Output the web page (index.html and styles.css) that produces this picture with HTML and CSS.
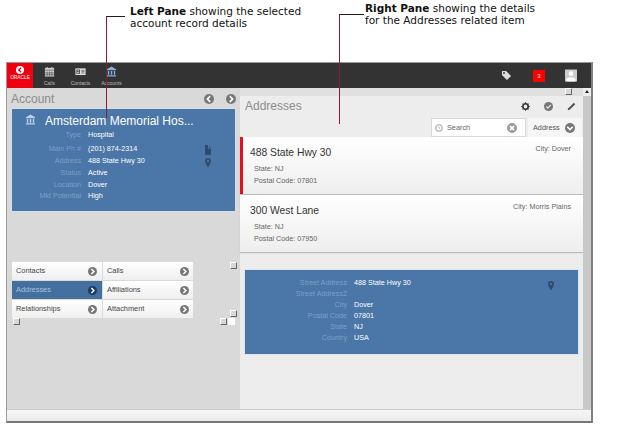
FILE: index.html
```html
<!DOCTYPE html>
<html lang="en">
<head>
<meta charset="utf-8">
<title>Accounts panes</title>
<link rel="stylesheet" href="styles.css">
</head>
<body>
<div class="page">
  <div class="notes">
    <p class="note note-left"><b>Left Pane</b> showing the selected<br>account record details</p>
    <p class="note note-right"><b>Right Pane</b> showing the details<br>for the Addresses related item</p>
  </div>
  <i class="leader leader-left"></i>
  <i class="leader leader-right"></i>

  <div class="window">
    <header class="topbar">
      <div class="logo">
        <svg class="logo-back" viewBox="0 0 8 8"><circle cx="4" cy="4" r="4" fill="#fff"/><path d="M5 1.800 2.800 4 5 6.200" fill="none" stroke="#e8000d" stroke-width="1.400"/></svg>
        <span>ORACLE</span>
      </div>
      <nav class="tabs">
        <div class="tab">
          <svg viewBox="0 0 12 12"><path d="M1 2h10v9.500H1z" fill="#ccc"/><path d="M1 4.500h10M3.500 6v5M6 6v5M8.500 6v5M1 7.500h10M1 9.500h10" stroke="#444" stroke-width=".6"/><path d="M3.500 1v2M8.500 1v2" stroke="#ccc" stroke-width="1"/></svg>
          <span>Calls</span>
        </div>
        <div class="tab">
          <svg viewBox="0 0 14 12"><rect x=".5" y="2" width="13" height="8.500" fill="#ddd"/><rect x="1.800" y="3.500" width="4.500" height="5.500" fill="#444"/><circle cx="4" cy="5" r="1" fill="#ddd"/><path d="M2.600 8.200c0-2 2.800-2 2.800 0z" fill="#ddd"/><path d="M8 4.500h4M8 6.200h4M8 8h4" stroke="#444" stroke-width=".8"/></svg>
          <span>Contacts</span>
        </div>
        <div class="tab">
          <svg viewBox="0 0 12 12"><path d="M6 .5 11 3.500V4.500H1V3.500z" fill="#7fb0de"/><path d="M2 5.500h1.500v4H2zM5.200 5.500h1.600v4H5.200zM8.500 5.500H10v4H8.500zM1 10h10v1.500H1z" fill="#7fb0de"/></svg>
          <span>Accounts</span>
        </div>
      </nav>
      <div class="top-actions">
        <svg class="tag" viewBox="0 0 12 12"><path d="M1 1h4.500L11 6.500 6.500 11 1 5.500z" fill="#ddd"/><circle cx="3.300" cy="3.300" r="1" fill="#333"/></svg>
        <span class="badge">3</span>
        <svg class="avatar" viewBox="0 0 13 13"><rect width="13" height="13" fill="#ccc"/><circle cx="6.500" cy="4.500" r="2.500" fill="#fff"/><path d="M1.500 11.500c0-4 10-4 10 0v1.500h-10z" fill="#fff"/></svg>
      </div>
    </header>

    <div class="main">
      <section class="left">
        <div class="left-head">
          <h2>Account</h2>
          <div class="pager">
            <span class="round"><svg viewBox="0 0 8 8"><path d="M5 1.700 2.700 4 5 6.300" /></svg></span>
            <span class="round"><svg viewBox="0 0 8 8"><path d="M3 1.700 5.300 4 3 6.300" /></svg></span>
          </div>
        </div>
        <div class="account-card">
          <div class="account-title">
            <svg viewBox="0 0 12 12"><path d="M6 .5 11 3.500V4.500H1V3.500z" fill="#bcd3ea"/><path d="M2 5.500h1.500v4H2zM5.200 5.500h1.600v4H5.200zM8.500 5.500H10v4H8.500zM1 10h10v1.500H1z" fill="#bcd3ea"/></svg>
            <h3>Amsterdam Memorial Hos...</h3>
          </div>
          <div class="account-body">
            <dl class="fields account-fields">
              <dt>Type</dt><dd>Hospital</dd>
              <dt>Main Ph #</dt><dd>(201) 874-2314</dd>
              <dt>Address</dt><dd>488 State Hwy 30</dd>
              <dt>Status</dt><dd>Active</dd>
              <dt>Location</dt><dd>Dover</dd>
              <dt>Mkt Potential</dt><dd>High</dd>
            </dl>
            <div class="card-icons">
              <svg viewBox="0 0 8 10"><path d="M1 0h3v4h3v6H1z" fill="#2f4b6b"/><path d="M5 1.500 7 3.500H5z" fill="#2f4b6b"/></svg>
              <svg viewBox="0 0 8 10"><path d="M4 0a3 3 0 0 1 3 3c0 2-3 6.500-3 6.500S1 5 1 3a3 3 0 0 1 3-3z" fill="#2f4b6b"/><circle cx="4" cy="3" r="1.200" fill="#4a76a8"/></svg>
            </div>
          </div>
        </div>
        <div class="related">
          <div class="rel">Contacts<span class="round"><svg viewBox="0 0 8 8"><path d="M3 1.700 5.300 4 3 6.300" /></svg></span></div>
          <div class="rel">Calls<span class="round"><svg viewBox="0 0 8 8"><path d="M3 1.700 5.300 4 3 6.300" /></svg></span></div>
          <div class="rel rel-on">Addresses<span class="round round-dark"><svg viewBox="0 0 8 8"><path d="M3 1.700 5.300 4 3 6.300" /></svg></span></div>
          <div class="rel">Affiliations<span class="round"><svg viewBox="0 0 8 8"><path d="M3 1.700 5.300 4 3 6.300" /></svg></span></div>
          <div class="rel">Relationships<span class="round"><svg viewBox="0 0 8 8"><path d="M3 1.700 5.300 4 3 6.300" /></svg></span></div>
          <div class="rel">Attachment<span class="round"><svg viewBox="0 0 8 8"><path d="M3 1.700 5.300 4 3 6.300" /></svg></span></div>
        </div>
        <i class="nub nub-a"></i><i class="nub nub-b"></i><i class="nub nub-c"></i><i class="nub nub-d"></i><i class="corner"></i>
      </section>

      <section class="right">
        <i class="nub nub-e"></i>
        <div class="right-head">
          <h2>Addresses</h2>
          <div class="right-icons">
            <svg viewBox="0 0 10 10"><circle cx="5" cy="5" r="3" fill="none" stroke="#333" stroke-width="1.800"/><path d="M5 .3v2M5 7.700v2M.3 5h2M7.700 5h2M1.700 1.700l1.400 1.400M6.900 6.900l1.400 1.400M8.300 1.700 6.900 3.100M3.100 6.900 1.700 8.300" stroke="#333" stroke-width="1.200"/></svg>
            <svg viewBox="0 0 10 10"><circle cx="5" cy="5" r="5" fill="#777"/><path d="M2.600 5 4.400 6.800 7.500 3.300" fill="none" stroke="#eee" stroke-width="1.300"/></svg>
            <svg viewBox="0 0 10 10"><path d="M7.600.8 9.200 2.400 3 8.600 .8 9.200 1.400 7z" fill="#555"/></svg>
          </div>
        </div>
        <div class="filters">
          <div class="search">
            <svg class="glass" viewBox="0 0 10 10"><circle cx="5" cy="5" r="4" fill="none" stroke="#aaa" stroke-width="1.400"/><path d="M5 3v2.300h1.800" fill="none" stroke="#aaa"/></svg>
            <span>Search</span>
            <span class="round clear"><svg viewBox="0 0 8 8"><path d="M2.300 2.300 5.700 5.700M5.700 2.300 2.300 5.700"/></svg></span>
          </div>
          <div class="select">
            <span>Address</span>
            <span class="round"><svg viewBox="0 0 8 8"><path d="M1.800 3 4 5.300 6.200 3"/></svg></span>
          </div>
        </div>
        <article class="addr addr-on">
          <div class="addr-top"><h4>488 State Hwy 30</h4><span>City: Dover</span></div>
          <p>State: NJ</p>
          <p>Postal Code: 07801</p>
        </article>
        <article class="addr">
          <div class="addr-top"><h4>300 West Lane</h4><span>City: Morris Plains</span></div>
          <p>State: NJ</p>
          <p>Postal Code: 07950</p>
        </article>
        <div class="detail">
          <dl class="fields detail-fields">
            <dt>Street Address</dt><dd>488 State Hwy 30</dd>
            <dt>Street Address2</dt><dd></dd>
            <dt>City</dt><dd>Dover</dd>
            <dt>Postal Code</dt><dd>07801</dd>
            <dt>State</dt><dd>NJ</dd>
            <dt>Country</dt><dd>USA</dd>
          </dl>
          <svg class="detail-pin" viewBox="0 0 8 10"><path d="M4 0a3 3 0 0 1 3 3c0 2-3 6.500-3 6.500S1 5 1 3a3 3 0 0 1 3-3z" fill="#2f4b6b"/><circle cx="4" cy="3" r="1.200" fill="#4a76a8"/></svg>
        </div>
      </section>

      <div class="vscroll"><svg viewBox="0 0 8 8"><path d="M4 2 6 5H2z" fill="#222"/></svg></div>
    </div>
    <footer class="status"></footer>
  </div>
</div>
</body>
</html>
```

FILE: styles.css
```css
* { box-sizing: border-box; }
html, body { margin: 0; padding: 0; background: #fff; }
body { font-family: "Liberation Sans", Arial, sans-serif; }
svg { display: block; }
h2, h3, h4, p, dl, dd, dt { margin: 0; font-weight: normal; }

.page { position: relative; width: 619px; height: 427px; overflow: hidden; }

.notes { height: 62px; position: relative; }
.note { position: absolute; margin: 0; font-family: "DejaVu Sans", Verdana, sans-serif; font-size: 10.5px; line-height: 12px; color: #111; }
.note b { font-weight: bold; }
.note-left { left: 130px; top: 5px; }
.note-right { left: 365px; top: 2px; }

.leader { position: absolute; z-index: 5; display: block; border-left: 1px solid #8b1a34; border-top: 1px solid #2a1a1a; }
.leader-left { left: 106px; top: 16px; width: 19px; height: 102px; }
.leader-right { left: 339px; top: 14px; width: 25px; height: 110px; }

.window { width: 587px; height: 361px; margin-left: 6px; border: 1px solid #9a9a9a; border-right: 2px solid #808080; border-bottom: 2px solid #777; display: flex; flex-direction: column; background: #eee; }

.topbar { height: 25px; flex: none; background: #333; display: flex; align-items: stretch; }
.logo { width: 26px; background: #f0000f; color: #fff; display: flex; flex-direction: column; align-items: center; padding-top: 3px; }
.logo-back { width: 8px; height: 8px; }
.logo span { font-size: 4.800px; line-height: 6px; margin-top: 1px; }
.tabs { display: flex; padding-left: 1px; }
.tab { width: 31px; display: flex; flex-direction: column; align-items: center; padding-top: 3px; color: #bbb; font-size: 5px; }
.tab svg { width: 11px; height: 11px; }
.tab span { line-height: 8px; margin-top: 2px; }
.top-actions { margin-left: auto; display: flex; align-items: center; padding-right: 14px; }
.tag { width: 11px; height: 11px; margin-right: 21px; }
.badge { width: 12px; height: 12px; background: #f00; color: #fff; font-size: 6px; line-height: 12px; text-align: center; margin-right: 20px; }
.avatar { width: 12px; height: 13px; }

.main { flex: 1; display: flex; min-height: 0; }

.round { width: 10px; height: 10px; border-radius: 50%; background: #777; display: inline-flex; flex: none; }
.round svg { width: 10px; height: 10px; }
.round path { fill: none; stroke: #fff; stroke-width: 1.300; }

.left { width: 233px; flex: none; background: #d9d9d9; position: relative; padding: 3px 5px 0; }
.left-head { display: flex; justify-content: space-between; align-items: center; height: 16px; }
.left-head h2 { font-size: 12px; color: #8c8c8c; line-height: 16px; margin-left: -1px; }
.pager { display: flex; gap: 12px; margin-right: -1px; margin-top: 0; }

.account-card { margin-top: 2px; width: 223px; height: 102px; background: #4a76a8; box-shadow: 0 0 0 1px #d6e0ea; }
.account-title { display: flex; align-items: center; height: 20px; padding-left: 13px; color: #fff; padding-top: 4px; }
.account-title svg { width: 11px; height: 11px; margin-top: -3px; }
.account-title h3 { font-size: 12px; line-height: 16px; margin-left: 9px; white-space: nowrap; }
.account-body { display: flex; }

.fields { display: grid; font-size: 7.200px; line-height: 12px; color: #fff; }
.fields dt { text-align: right; color: #7f9fc6; }
.account-fields { grid-template-columns: 69px 1fr; column-gap: 7px; grid-template-rows: 14px 12px 12px 12px 11px 12px; width: 186px; }
.card-icons { display: flex; flex-direction: column; gap: 3px; padding: 16px 0 0 6px; }
.card-icons svg { width: 8px; height: 10px; }

.related { margin-top: 51px; width: 181px; display: grid; grid-template-columns: 90px 90px; gap: 1px; background: #d9d9d9; }
.rel { height: 18px; background: linear-gradient(#fff, #efefef); font-size: 7.400px; line-height: 18px; color: #444; padding: 0 5px 0 4px; display: flex; justify-content: space-between; align-items: center; }
.rel:nth-child(even) { padding-right: 4px; }
.rel .round { width: 9px; height: 9px; }
.rel .round svg { width: 9px; height: 9px; }
.rel-on { background: #44709f; color: #a9c1dc; }
.round-dark { background: #1d3b5f; }

.nub { position: absolute; width: 7px; height: 7px; background: #d8d8d8; border: 1px solid #666; border-left-color: #fff; border-top-color: #fff; }
.nub-a { left: 223px; top: 174px; }
.nub-b { left: 223px; top: 222px; }
.nub-c { left: 6px; top: 230px; }
.nub-d { left: 213px; top: 230px; }
.nub-e { right: 11px; top: 0; }
.corner { position: absolute; left: 221px; top: 230px; width: 7px; height: 7px; background: #fff; }

.right { flex: 1; background: #ededed; position: relative; min-width: 0; background-image: linear-gradient(#e0e0e0 0, #e0e0e0 8px, transparent 8px); }
.right-head { height: 30px; padding: 10px 7px 0 5px; display: flex; justify-content: space-between; }
.right-head h2 { font-size: 12px; color: #8c8c8c; line-height: 16px; }
.right-icons { display: flex; gap: 14px; padding-top: 4px; }
.right-icons svg { width: 9px; height: 9px; }
.filters { height: 19px; display: flex; justify-content: flex-end; gap: 2px; padding-right: 1px; font-size: 7.300px; color: #666; }
.search { width: 95px; background: #fff; border: 1px solid #d8d8d8; display: flex; align-items: center; padding: 0 8px 0 3px; }
.glass { width: 8px; height: 8px; margin-right: 4px; }
.search span:nth-child(2) { flex: 1; }
.clear { background: #999; }
.select { width: 54px; background: #f6f6f6; display: flex; align-items: center; justify-content: space-between; padding: 0 7px 0 5px; color: #555; }

.addr { height: 57px; background: linear-gradient(#fff, #eee); padding: 6px 12px 0 10px; margin-bottom: 1px; color: #666; font-size: 7.200px; box-shadow: 0 1px 1px #bbb; }
.addr-on { border-left: 3px solid #e3101f; padding-left: 7px; }
.addr-top { display: flex; justify-content: space-between; height: 20px; }
.addr-top h4 { font-size: 10.300px; line-height: 20px; color: #333; }
.addr-top span { line-height: 12px; }
.addr p { line-height: 12px; padding-left: 4px; }

.detail { margin: 18px 5px 0; height: 84px; background: #4a76a8; box-shadow: 0 0 0 1px #dde5ee; position: relative; padding-top: 7px; }
.detail-fields { grid-template-columns: 102px 1fr; column-gap: 7px; grid-auto-rows: 11px; }
.detail-pin { position: absolute; left: 302px; top: 11px; width: 8px; height: 10px; }

.vscroll { width: 8px; flex: none; background: #c8c8c8; }
.vscroll svg { width: 8px; height: 8px; background: #eee; }

.status { height: 12px; flex: none; background: linear-gradient(#f6f6f6, #ececec); border-top: 1px solid #ccc; }
```
